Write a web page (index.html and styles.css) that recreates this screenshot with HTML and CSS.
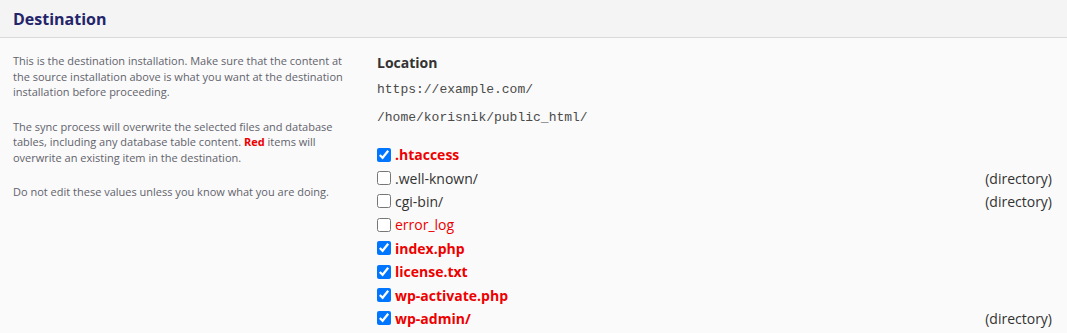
FILE: index.html
```html
<!DOCTYPE html>
<html lang="en">
<head>
    <meta charset="UTF-8">
    <title>Destination</title>
    <link rel="stylesheet" href="styles.css">
</head>
<body>
    <div class="panel">
        <div class="panel-header">
            <h2>Destination</h2>
        </div>

        <div class="panel-body">
            <div class="help">
                <p>This is the destination installation. Make sure that the content at the source installation above is what you want at the destination installation before proceeding.</p>
                <p>The sync process will overwrite the selected files and database tables, including any database table content. <strong class="red">Red</strong> items will overwrite an existing item in the destination.</p>
                <p>Do not edit these values unless you know what you are doing.</p>
            </div>

            <div class="details">
                <h3>Location</h3>
                <div class="path">https://example.com/</div>
                <div class="path">/home/korisnik/public_html/</div>

                <ul class="files">
                    <li><label class="overwrite strong"><input type="checkbox" checked> .htaccess</label></li>
                    <li><label><input type="checkbox"> .well-known/</label><span class="kind">(directory)</span></li>
                    <li><label><input type="checkbox"> cgi-bin/</label><span class="kind">(directory)</span></li>
                    <li><label class="overwrite"><input type="checkbox"> error_log</label></li>
                    <li><label class="overwrite strong"><input type="checkbox" checked> index.php</label></li>
                    <li><label class="overwrite strong"><input type="checkbox" checked> license.txt</label></li>
                    <li><label class="overwrite strong"><input type="checkbox" checked> wp-activate.php</label></li>
                    <li><label class="overwrite strong"><input type="checkbox" checked> wp-admin/</label><span class="kind">(directory)</span></li>
                </ul>
            </div>
        </div>
    </div>
</body>
</html>
```

FILE: styles.css
```css
body {
    margin: 0;
    font-family: 'Open Sans', 'Noto Sans', sans-serif;
    background-color: #fafafa;
    color: #333;
}

.panel-header {
    background-color: #f4f4f4;
    border-bottom: 1px solid #d9d9d9;
    height: 37px;
    padding: 0 13px;
    display: flex;
    align-items: center;
}

.panel-header h2 {
    margin: 0;
    font-size: 16px;
    font-weight: bold;
    color: #24246b;
}

.panel-body {
    display: flex;
    padding: 15px 15px 0 13px;
}

.help {
    width: 336px;
    flex-shrink: 0;
    margin-right: 28px;
}

.help p {
    margin: 0 0 19px;
    font-size: 11px;
    line-height: 15.5px;
    color: #62626c;
}

.red {
    color: #ee0000;
}

.details {
    flex-grow: 1;
}

.details h3 {
    margin: 0 0 10px;
    font-size: 14px;
    font-weight: bold;
    color: #333;
}

.path {
    font-family: 'Liberation Mono', monospace;
    font-size: 13px;
    color: #4a4a4a;
    margin-bottom: 13px;
}

.files {
    list-style-type: none;
    margin: 18px 0 0;
    padding: 0;
}

.files li {
    display: flex;
    justify-content: space-between;
    align-items: center;
    height: 23.4px;
    font-size: 14px;
}

.files label {
    display: flex;
    align-items: center;
    gap: 4px;
    color: #333;
}

.files input {
    width: 14px;
    height: 14px;
    margin: 0;
}

.files .overwrite {
    color: #ee0000;
}

.files .strong {
    font-weight: bold;
}

.kind {
    color: #333;
}
```
